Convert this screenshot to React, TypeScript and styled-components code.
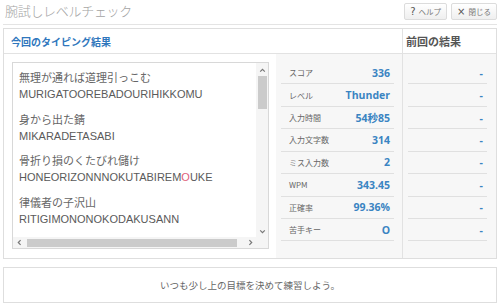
import React from 'react';
import styled, { createGlobalStyle } from 'styled-components';

const GlobalStyle = createGlobalStyle`
  html, body {
    margin: 0;
    padding: 0;
    background: #fff;
  }
  body {
    font-family: "Noto Sans CJK JP", "Open Sans", sans-serif;
    color: #555;
  }
  * {
    box-sizing: border-box;
  }
`;

const phrases = [
  { jp: '無理が通れば道理引っこむ', romaji: 'MURIGATOOREBADOURIHIKKOMU' },
  { jp: '身から出た錆', romaji: 'MIKARADETASABI' },
  { jp: '骨折り損のくたびれ儲け', romaji: 'HONEORIZONNNOKUTABIREMOUKE', miss: 22 },
  { jp: '律儀者の子沢山', romaji: 'RITIGIMONONOKODAKUSANN' },
];

const stats = [
  { label: 'スコア', value: '336' },
  { label: 'レベル', value: 'Thunder' },
  { label: '入力時間', value: '54秒85' },
  { label: '入力文字数', value: '314' },
  { label: 'ミス入力数', value: '2' },
  { label: 'WPM', value: '343.45' },
  { label: '正確率', value: '99.36%' },
  { label: '苦手キー', value: 'O' },
];

const Chevron: React.FC<{ dir: 'up' | 'down' | 'left' | 'right' }> = ({ dir }) => {
  const rot = { up: 0, right: 90, down: 180, left: 270 }[dir];
  return (
    <svg width="7" height="7" viewBox="0 0 7 7" style={{ transform: `rotate(${rot}deg)` }}>
      <path d="M1.2 4.6 L3.5 2.3 L5.8 4.6" fill="none" stroke="#777" strokeWidth="1.2" />
    </svg>
  );
};

const App: React.FC = () => {
  return (
    <Page>
      <GlobalStyle />
      <TitleBar>
        <Title>腕試しレベルチェック</Title>
        <Buttons>
          <ToolButton>
            <ButtonIcon>?</ButtonIcon>ヘルプ
          </ToolButton>
          <ToolButton>
            <ButtonIcon>×</ButtonIcon>閉じる
          </ToolButton>
        </Buttons>
      </TitleBar>

      <Panel>
        <HeaderCell $accent>今回のタイピング結果</HeaderCell>
        <HeaderCell $divider>前回の結果</HeaderCell>

        <CurrentBody>
          <TextWrap>
            <TextBox>
              <TextContent>
                {phrases.map((p) => (
                  <Phrase key={p.romaji}>
                    <PhraseJp>{p.jp}</PhraseJp>
                    <PhraseRomaji>
                      {p.miss !== undefined ? (
                        <>
                          {p.romaji.slice(0, p.miss)}
                          <Miss>{p.romaji[p.miss]}</Miss>
                          {p.romaji.slice(p.miss + 1)}
                        </>
                      ) : (
                        p.romaji
                      )}
                    </PhraseRomaji>
                  </Phrase>
                ))}
              </TextContent>
              <VScroll>
                <Chevron dir="up" />
                <VThumb />
                <Spacer />
                <Chevron dir="down" />
              </VScroll>
              <HScroll>
                <Chevron dir="left" />
                <HThumb />
                <Chevron dir="right" />
              </HScroll>
              <Corner />
            </TextBox>
          </TextWrap>
          <StatList>
            {stats.map((s) => (
              <StatRow key={s.label}>
                <StatLabel>{s.label}</StatLabel>
                <StatValue>{s.value}</StatValue>
              </StatRow>
            ))}
          </StatList>
        </CurrentBody>

        <PrevBody>
          {stats.map((s) => (
            <PrevRow key={s.label}>
              <StatValue>-</StatValue>
            </PrevRow>
          ))}
        </PrevBody>
      </Panel>

      <MessageBox>いつも少し上の目標を決めて練習しよう。</MessageBox>
    </Page>
  );
};

const Page = styled.div`
  width: 500px;
  padding: 0 3px;
`;

const TitleBar = styled.div`
  height: 25px;
  display: flex;
  justify-content: space-between;
  align-items: flex-start;
  border-bottom: 1px solid #e4e4e4;
  padding-left: 2px;
`;

const Title = styled.h1`
  margin: 2px 0 0;
  font-size: 13px;
  line-height: 18px;
  font-weight: 300;
  color: #a3a3a3;
  letter-spacing: -0.3px;
`;

const Buttons = styled.div`
  display: flex;
  gap: 4px;
  padding-top: 3px;
`;

const ToolButton = styled.div`
  height: 17px;
  padding: 0 5px;
  display: flex;
  align-items: center;
  gap: 3px;
  border: 1px solid #dcdcdc;
  border-radius: 2px;
  background: linear-gradient(#ffffff, #efefef);
  font-size: 7.5px;
  color: #777;
`;

const ButtonIcon = styled.span`
  font-family: "DejaVu Sans", sans-serif;
  font-size: 10px;
  color: #555;
`;

const Panel = styled.div`
  margin-top: 3px;
  border: 1px solid #dedede;
  display: grid;
  grid-template-columns: 1fr 94px;
  grid-template-rows: 25px 204px;
`;

const HeaderCell = styled.div<{ $accent?: boolean; $divider?: boolean }>`
  display: flex;
  align-items: center;
  padding-left: ${(p) => (p.$divider ? '3px' : '7px')};
  border-bottom: 1px solid #e2e2e2;
  border-left: ${(p) => (p.$divider ? '1px solid #e2e2e2' : 'none')};
  font-size: ${(p) => (p.$accent ? '10px' : '11px')};
  font-weight: bold;
  color: ${(p) => (p.$accent ? '#2f77bd' : '#555')};
`;

const CurrentBody = styled.div`
  display: flex;
`;

const TextWrap = styled.div`
  background: #fff;
  padding: 8px 7px 9px 8px;
`;

const TextBox = styled.div`
  width: 257px;
  height: 187px;
  border: 1px solid #d8d8d8;
  background: #fff;
  display: grid;
  grid-template-columns: 1fr 12px;
  grid-template-rows: 1fr 11px;
`;

const TextContent = styled.div`
  overflow: hidden;
  padding: 6px 0 0 6px;
`;

const Phrase = styled.div`
  margin-bottom: 7.6px;
`;

const PhraseJp = styled.div`
  font-size: 11px;
  line-height: 17px;
  color: #666;
  white-space: nowrap;
`;

const PhraseRomaji = styled.div`
  font-family: "Liberation Sans", Arial, sans-serif;
  font-size: 11px;
  line-height: 17px;
  color: #5a5a5a;
  white-space: nowrap;
`;

const Miss = styled.span`
  color: #e0607a;
`;

const VScroll = styled.div`
  background: #f5f5f5;
  display: flex;
  flex-direction: column;
  align-items: center;
  padding: 4px 0 2px;
`;

const VThumb = styled.div`
  width: 9px;
  height: 33px;
  margin-top: 2px;
  background: #cbcbcb;
`;

const Spacer = styled.div`
  flex: 1;
`;

const HScroll = styled.div`
  background: #f5f5f5;
  display: flex;
  align-items: center;
  gap: 4px;
  padding: 0 2px 0 3px;
`;

const HThumb = styled.div`
  flex: 1;
  height: 8px;
  margin-right: 6px;
  background: #cbcbcb;
`;

const Corner = styled.div`
  background: #f5f5f5;
`;

const StatList = styled.div`
  flex: 1;
  background: #f7f7f7;
  padding: 8px 8px 0 5px;
`;

const StatRow = styled.div`
  height: 22.43px;
  display: flex;
  align-items: center;
  justify-content: space-between;
  padding: 0 4px 0 8px;
  border-bottom: 1px solid #e0e0e0;
`;

const StatLabel = styled.span`
  font-size: 8px;
  color: #666;
`;

const StatValue = styled.span`
  font-family: "Open Sans", "Noto Sans CJK JP", sans-serif;
  font-size: 10.5px;
  font-weight: bold;
  color: #3a84c2;
`;

const PrevBody = styled.div`
  background: #f7f7f7;
  border-left: 1px solid #e2e2e2;
  padding: 8px 9px 0 5px;
`;

const PrevRow = styled.div`
  height: 22.43px;
  display: flex;
  align-items: center;
  justify-content: flex-end;
  padding-right: 4px;
  border-bottom: 1px solid #e0e0e0;
`;

const MessageBox = styled.div`
  margin-top: 8px;
  height: 36px;
  border: 1px solid #dedede;
  display: flex;
  align-items: center;
  justify-content: center;
  font-size: 9.5px;
  color: #666;
`;

export default App;
